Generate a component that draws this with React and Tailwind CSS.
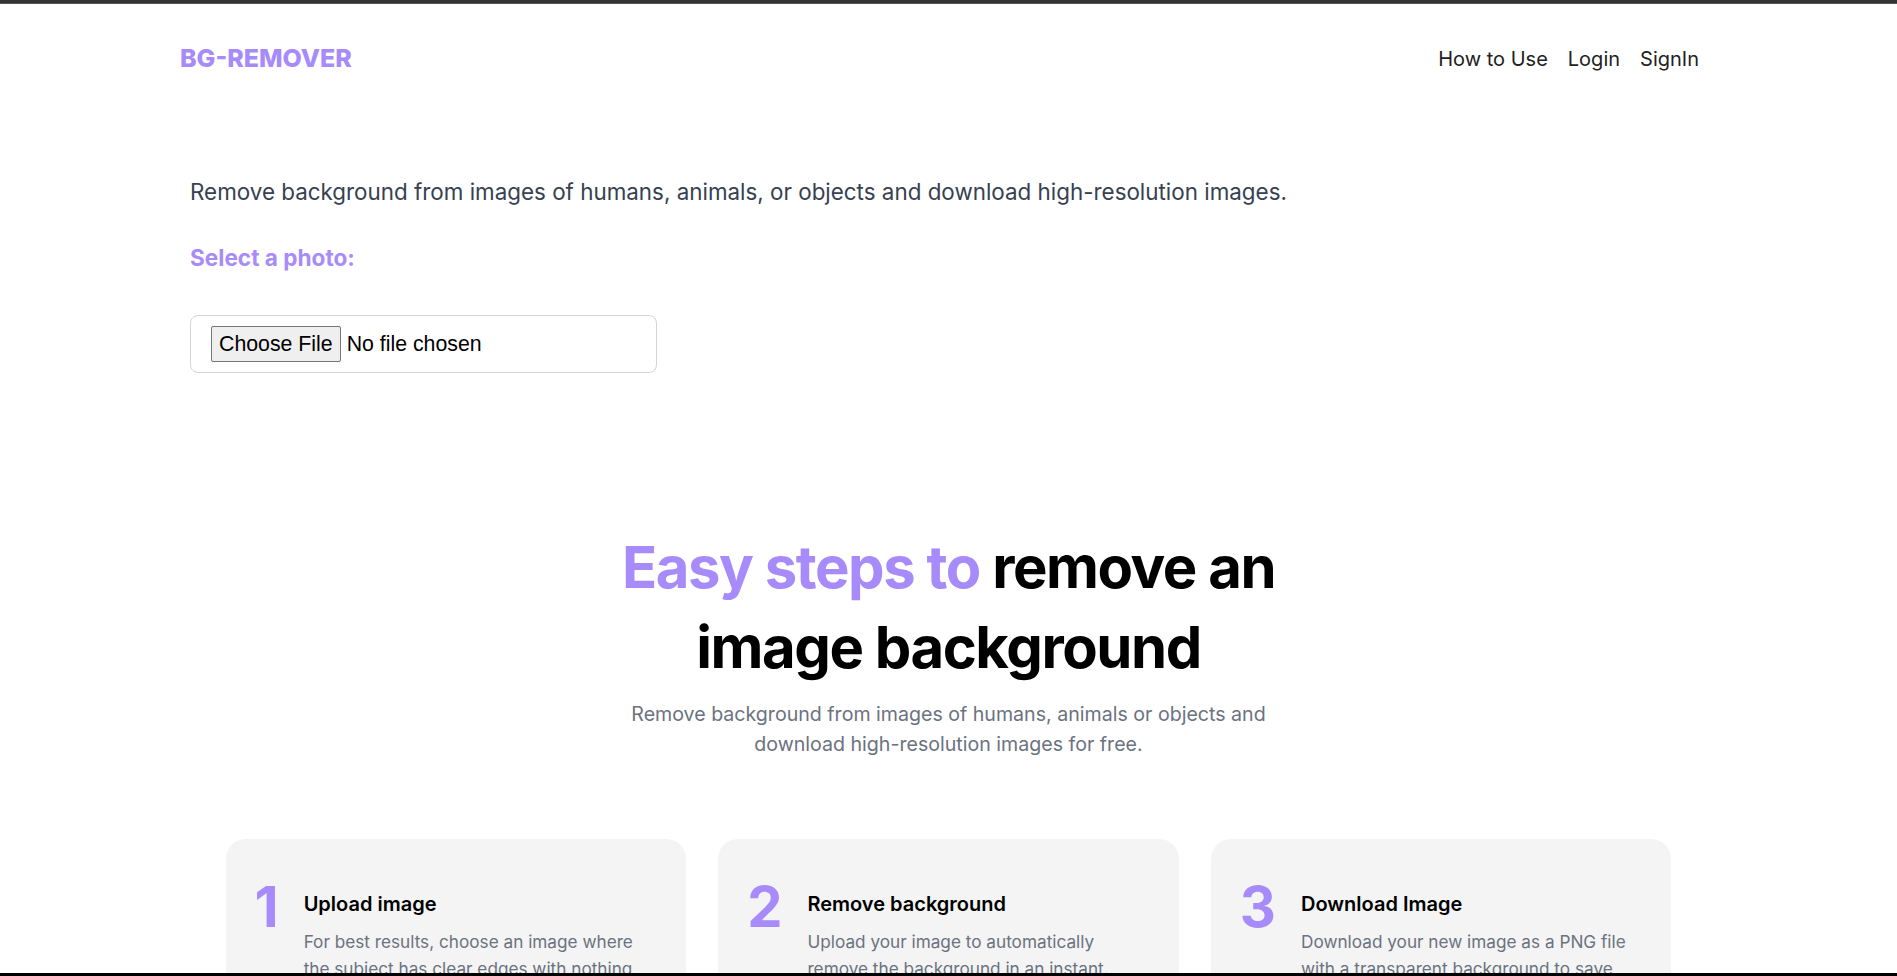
const steps = [
  {
    n: '1',
    title: 'Upload image',
    text: 'For best results, choose an image where the subject has clear edges with nothing overlapping.',
  },
  {
    n: '2',
    title: 'Remove background',
    text: 'Upload your image to automatically remove the background in an instant.',
  },
  {
    n: '3',
    title: 'Download Image',
    text: 'Download your new image as a PNG file with a transparent background to save, share, or edit later.',
  },
]

export default function App() {
  return (
    <div className="min-h-screen bg-white font-[Inter,sans-serif] text-black">
      {/* barre du haut */}
      <div className="h-[4px] bg-[#343434] border-b border-[#555]" />

      {/* navigation */}
      <header className="h-[110px] flex items-center justify-between pl-[180px] pr-[198px]">
        <a className="text-[25px] font-extrabold text-[#a78bfa]">BG-REMOVER</a>
        <nav className="flex items-center gap-5 text-xl text-[#222]">
          <a>How to Use</a>
          <a>Login</a>
          <a>SignIn</a>
        </nav>
      </header>

      {/* upload */}
      <section className="pl-[190px] mt-16">
        <p className="text-[22.4px] leading-7 text-[#374151]">
          Remove background from images of humans, animals, or objects and download high-resolution images.
        </p>
        <label className="block mt-[38px] text-[22.6px] leading-7 font-bold text-[#a78bfa]">Select a photo:</label>
        <div className="mt-[43px] w-[467px] rounded-lg border border-[#d4d4d8] px-5 py-2.5">
          <input
            type="file"
            className="font-['Liberation_Sans',Arial,sans-serif] text-[21.3px] leading-7 text-black file:bg-[#efefef] file:border file:border-[#767676] file:rounded-[2px] file:px-[7px] file:py-[3px] file:mr-1.5 file:text-black"
          />
        </div>
      </section>

      {/* étapes */}
      <section className="mt-[154px] flex flex-col items-center text-center">
        <h1 className="max-w-[700px] text-[58px] tracking-tight leading-[80px] font-bold">
          <span className="text-[#a78bfa]">Easy steps to</span> remove an image background
        </h1>
        <p className="mt-3 max-w-2xl text-[19.6px] leading-[30px] text-[#6b7280]">
          Remove background from images of humans, animals or objects and download high-resolution images for free.
        </p>
      </section>

      <div className="mt-20 w-[1446px] mx-auto grid grid-cols-3 gap-8">
        {steps.map((s) => (
          <div key={s.n} className="rounded-[20px] bg-[#f4f4f4] px-[29px] pt-10 pb-10 flex gap-[25px]">
            <span className="text-[56px] leading-none font-bold text-[#a78bfa]">{s.n}</span>
            <div className="mt-[11px]">
              <h3 className="text-xl leading-7 font-semibold">{s.title}</h3>
              <p className="mt-[10px] text-[17.2px] leading-[27px] text-[#6b7280]">{s.text}</p>
            </div>
          </div>
        ))}
      </div>

      <div className="fixed bottom-0 left-0 right-0 h-[3px] bg-black" />
    </div>
  )
}
